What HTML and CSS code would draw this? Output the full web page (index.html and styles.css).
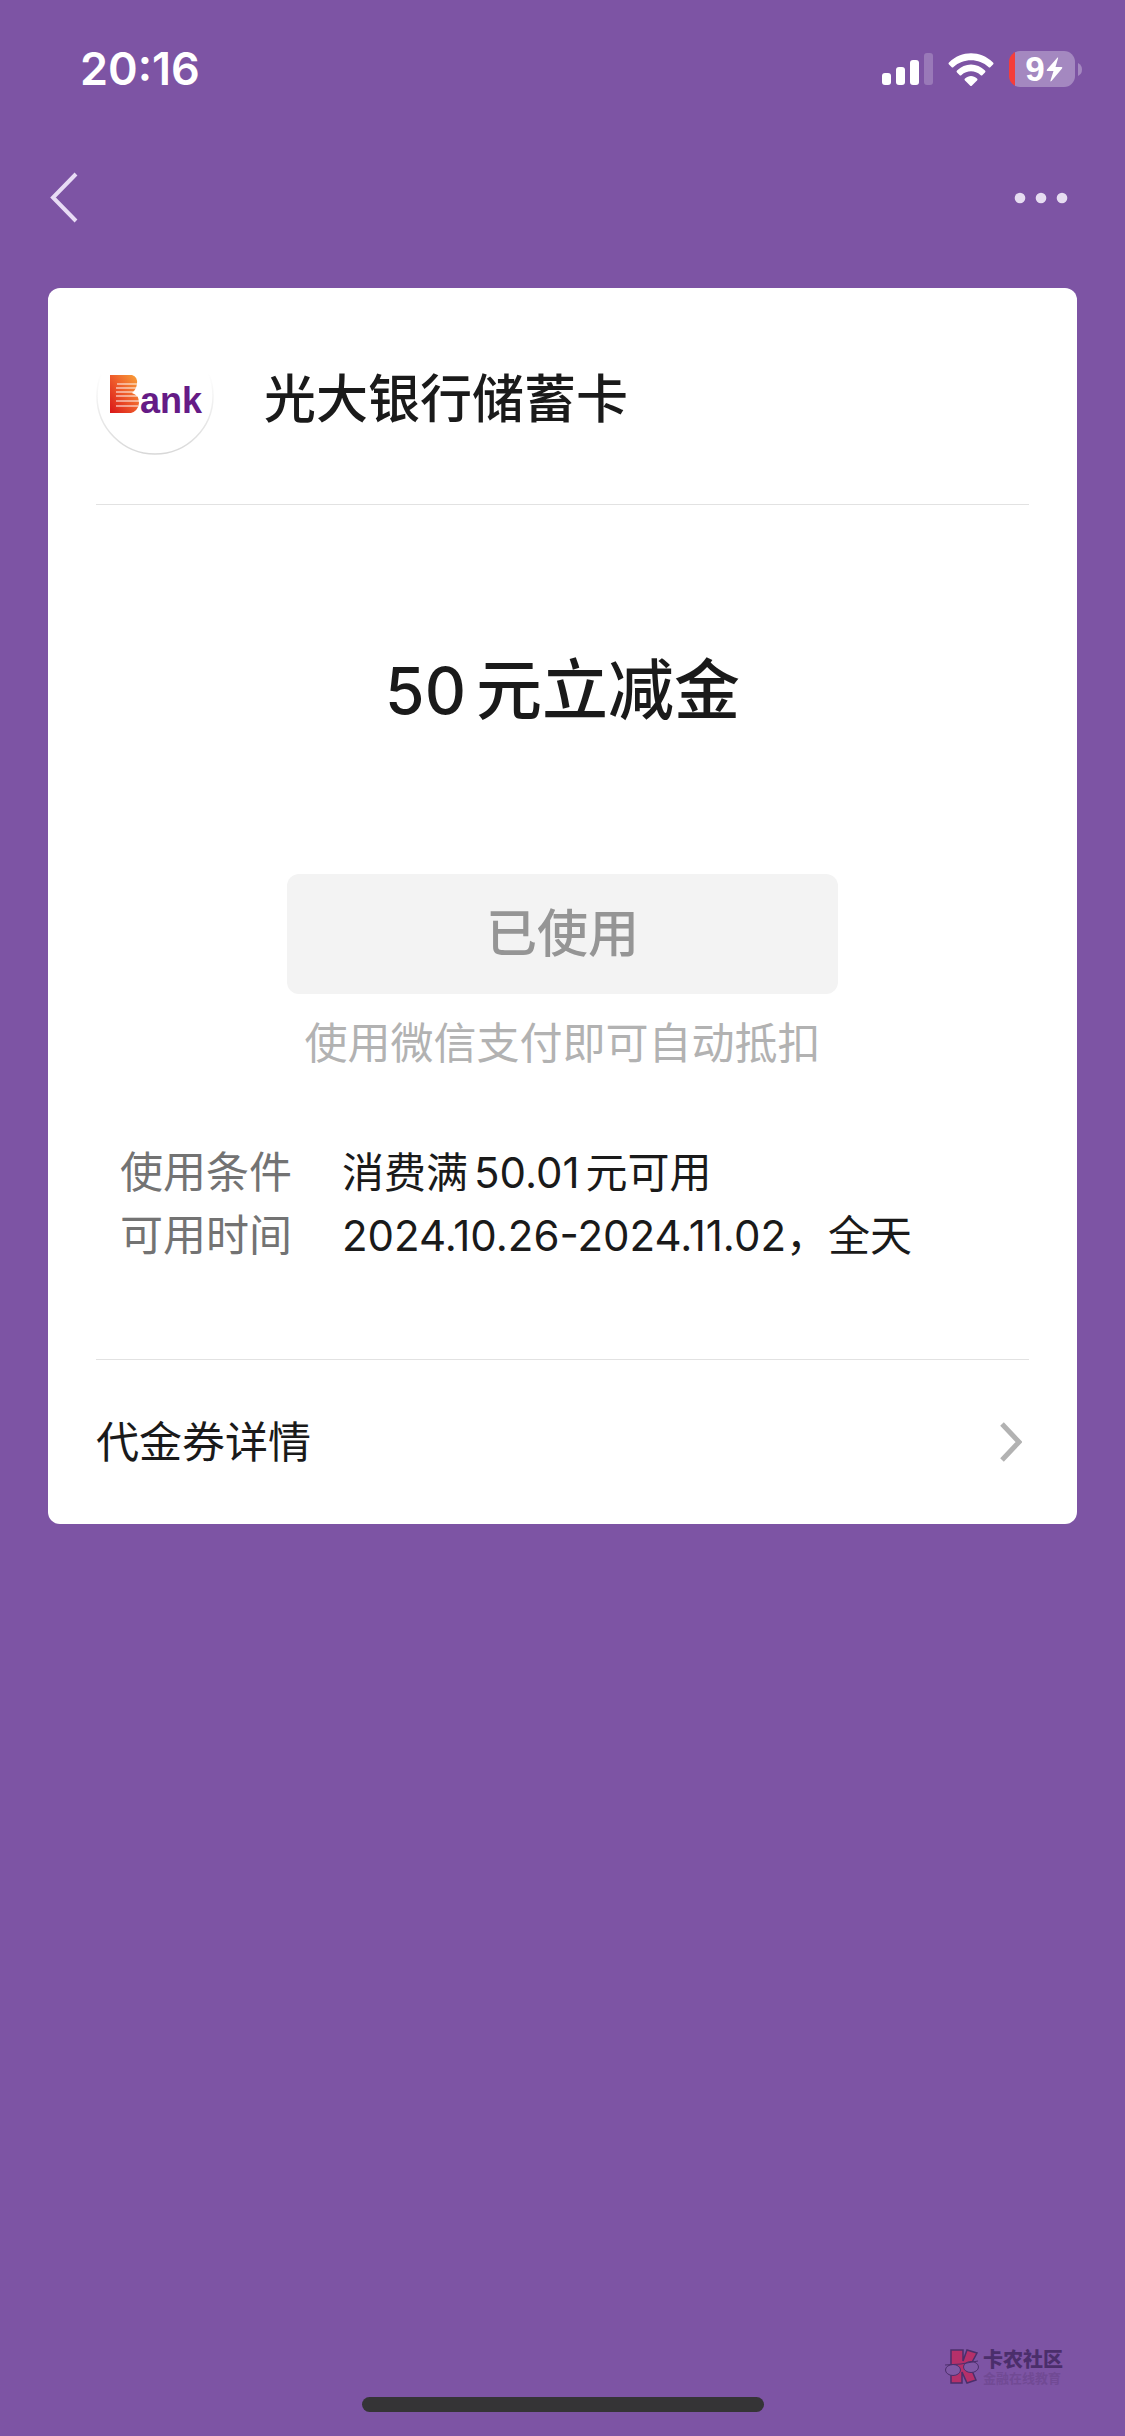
FILE: index.html
```html
<!DOCTYPE html>
<html lang="zh-CN">
<head>
<meta charset="utf-8">
<meta name="viewport" content="width=device-width, initial-scale=1">
<title>代金券</title>
<link rel="stylesheet" href="styles.css">
</head>
<body>
<div class="screen">
  <div class="status">
    <time class="clock">20:16</time>
    <div class="status-icons">
      <svg class="signal" viewBox="0 0 51 33" aria-hidden="true">
        <rect x="0" y="20" width="9" height="12" rx="3"/>
        <rect x="14" y="14" width="9" height="18" rx="3"/>
        <rect x="28" y="7" width="9" height="25" rx="3"/>
        <rect x="42" y="0" width="9" height="32" rx="3" opacity=".22"/>
      </svg>
      <svg class="wifi" viewBox="0 0 46 33" aria-hidden="true">
        <path d="M1 9.500C13.500-2.800 32.500-2.800 45 9.500Q46 10.500 45 11.500L42.500 14Q41.500 15 40.500 14C31 5 15 5 5.500 14Q4.500 15 3.500 14L1 11.500Q0 10.500 1 9.500Z"/>
        <path d="M9 17.500C17 9.500 29 9.500 37 17.500Q38 18.500 37 19.500L34.500 22Q33.500 23 32.500 22C27 17 19 17 13.500 22Q12.500 23 11.500 22L9 19.500Q8 18.500 9 17.500Z"/>
        <path d="M17 25.500C20.500 22 25.500 22 29 25.500Q30 26.500 29 27.500L24 32.500Q23 33.500 22 32.500L17 27.500Q16 26.500 17 25.500Z"/>
      </svg>
      <div class="battery">
        <div class="cell">
          <span>9</span>
          <svg class="bolt" viewBox="0 0 17 25" aria-hidden="true"><path d="M11.500.5Q12.500 0 12 1.500L9.500 10H15.500Q17 10 16 11.500L5.500 24Q4 25 4.500 23.500L7.500 14H1.500Q0 14 1 12.500Z"/></svg>
        </div>
        <svg class="tip" viewBox="0 0 4 13" aria-hidden="true"><path d="M0 0Q4 2 4 6.500T0 13Z"/></svg>
      </div>
    </div>
  </div>

  <nav class="nav">
    <button class="nav-button" type="button" aria-label="返回">
      <svg class="back" viewBox="0 0 28 52" aria-hidden="true"><path d="M26 2L3 25.500L26 49"/></svg>
    </button>
    <button class="nav-button" type="button" aria-label="更多">
      <svg class="more" viewBox="0 0 54 12" aria-hidden="true"><circle cx="6" cy="6" r="5.300"/><circle cx="27" cy="6" r="5.300"/><circle cx="48" cy="6" r="5.300"/></svg>
    </button>
  </nav>

  <main class="card">
    <header class="issuer">
      <svg class="logo" viewBox="0 0 118 118" role="img" aria-label="Bank">
        <defs>
          <linearGradient id="flame" x1="1" y1="0" x2="0" y2="1"><stop offset="0" stop-color="#f9a63a"/><stop offset=".5" stop-color="#ee5a2a"/><stop offset="1" stop-color="#d91518"/></linearGradient>
          <linearGradient id="ring" x1="0" y1="0" x2="0" y2="1"><stop offset=".3" stop-color="#fff"/><stop offset="1" stop-color="#d8d8d8"/></linearGradient>
        </defs>
        <circle cx="59" cy="59" r="58" fill="#fff" stroke="url(#ring)" stroke-width="1.500"/>
        <path d="M14 38H36Q42 40 41 47Q40 53 36 56Q43 58 43 66Q42 74 35 76H14Z" fill="url(#flame)"/>
        <path d="M21 47H41M20 51H41M20 55H38M20 59H41M20 64H43M20 69H42" stroke="#fff" stroke-width="1.500" opacity=".65"/>
        <text x="44" y="76" class="logo-text">ank</text>
      </svg>
      <h1 class="issuer-name">光大银行储蓄卡</h1>
    </header>

    <section class="offer">
      <p class="amount"><span class="number">50</span><span>元立减金</span></p>
      <button class="used" type="button" disabled>已使用</button>
      <p class="hint">使用微信支付即可自动抵扣</p>
      <dl class="terms">
        <dt>使用条件</dt><dd>消费满<span class="inline-number">50.01</span>元可用</dd>
        <dt>可用时间</dt><dd>2024.10.26-2024.11.02，全天</dd>
      </dl>
    </section>

    <a class="details" href="#details">
      <span>代金券详情</span>
      <svg class="chevron" viewBox="0 0 22 40" aria-hidden="true"><path d="M2 2L19 20L2 38"/></svg>
    </a>
  </main>

  <footer class="footer">
    <div class="community">
      <svg class="mascot" viewBox="0 0 34 36" aria-hidden="true">
        <path d="M6 1H18V12L22 1L32 4L25 17L31 31L22 34L17 23V34H6Z" fill="#b5306a" stroke="#4b2e6b" stroke-width="1.500"/>
        <ellipse cx="8" cy="21" rx="7.500" ry="5.500" fill="#8058a5" stroke="#4b2e6b"/>
        <ellipse cx="26" cy="18" rx="7.500" ry="5.500" fill="#8058a5" stroke="#4b2e6b"/>
        <path d="M0 16L16 15L33 12" fill="none" stroke="#4b2e6b"/>
      </svg>
      <div class="community-text"><strong>卡农社区</strong><small>金融在线教育</small></div>
    </div>
    <div class="home-bar"></div>
  </footer>
</div>
</body>
</html>
```
FILE: styles.css
```css
* { box-sizing: border-box; }

body {
  margin: 0;
  background: #7d54a4;
  color: #1a1a1a;
  font-family: Inter, "Noto Sans CJK SC", sans-serif;
  font-size: 42px;
}

h1, p, dl, dd { margin: 0; }
button { border: 0; padding: 0; background: none; font: inherit; }
svg { display: block; }

.screen {
  display: flex;
  flex-direction: column;
  min-height: 100vh;
}

.status {
  display: flex;
  justify-content: space-between;
  align-items: center;
  height: 138px;
  padding: 0 43px 0 80px;
  color: #fff;
}
.clock { font-size: 45px; font-weight: 600; line-height: 54px; }
.status-icons { display: flex; align-items: center; gap: 15px; }
.signal { width: 51px; height: 33px; fill: #fff; }
.wifi { width: 46px; height: 33px; fill: #fff; }
.battery { display: flex; align-items: center; gap: 3px; }
.cell {
  display: flex;
  align-items: center;
  justify-content: center;
  gap: 1px;
  width: 66px;
  height: 36px;
  padding-left: 4px;
  border-radius: 11px;
  background: linear-gradient(90deg, #f53d3a 6px, #a488c0 6px);
  font: 700 35px/36px "Liberation Sans", Arial, sans-serif;
}
.bolt { width: 17px; height: 25px; fill: #fff; }
.tip { width: 4px; height: 13px; fill: #a488c0; }

.nav {
  display: flex;
  justify-content: space-between;
  align-items: center;
  height: 120px;
  padding: 0 57px 0 50px;
}
.back { width: 28px; height: 52px; fill: none; stroke: #e8dcf5; stroke-width: 4; }
.more { width: 54px; height: 12px; fill: #e6dcf1; }

.card {
  margin: 30px 48px 0;
  padding: 0 48px;
  border-radius: 12px;
  background: #fff;
}

.issuer {
  display: flex;
  align-items: center;
  gap: 50px;
  height: 217px;
  border-bottom: 1px solid #e2e2e2;
}
.logo { width: 118px; height: 118px; }
.logo-text { font: 700 36px "Liberation Sans", Arial, sans-serif; fill: #651b86; }
.issuer-name {
  font-family: "Noto Sans CJK SC", sans-serif;
  font-size: 52px;
  font-weight: 500;
  line-height: 72px;
}

.offer {
  display: flex;
  flex-direction: column;
  align-items: center;
  padding: 137px 0 92px;
}
.amount {
  display: flex;
  align-items: baseline;
  gap: 10px;
  font-size: 66px;
  font-weight: 500;
  line-height: 96px;
}
.number { font-size: 64px; }
.used {
  width: 551px;
  max-width: 100%;
  height: 120px;
  margin-top: 135px;
  border-radius: 12px;
  background: #f3f3f3;
  color: #959595;
  font-size: 51px;
  font-weight: 500;
  line-height: 120px;
}
.hint { margin-top: 18px; color: #b2b2b2; font-size: 43px; line-height: 63px; }

.terms {
  display: grid;
  grid-template-columns: 172px 1fr;
  column-gap: 50px;
  align-self: stretch;
  margin-top: 66px;
  padding: 0 24px;
  line-height: 63px;
}
.terms dt { color: #737373; font-size: 43px; }
.inline-number { margin: 0 6px; }

.details {
  display: flex;
  justify-content: space-between;
  align-items: center;
  height: 165px;
  padding-right: 7px;
  border-top: 1px solid #e2e2e2;
  color: inherit;
  font-size: 43px;
  line-height: 63px;
  text-decoration: none;
}
.chevron { width: 22px; height: 40px; fill: none; stroke: #b2b2b2; stroke-width: 5; }

.footer {
  display: flex;
  flex-direction: column;
  gap: 12px;
  margin-top: auto;
  padding-bottom: 24px;
}
.community {
  display: flex;
  align-items: center;
  align-self: flex-end;
  gap: 3px;
  margin-right: 62px;
}
.mascot { width: 36px; height: 36px; }
.community-text { display: flex; flex-direction: column; color: #4b2e6b; }
.community-text strong { font-size: 20px; font-weight: 900; line-height: 22px; }
.community-text small { color: #714a94; font-size: 13px; font-weight: 700; line-height: 14px; }
.home-bar {
  align-self: center;
  width: 402px;
  height: 15px;
  border-radius: 8px;
  background: #353436;
}
```
